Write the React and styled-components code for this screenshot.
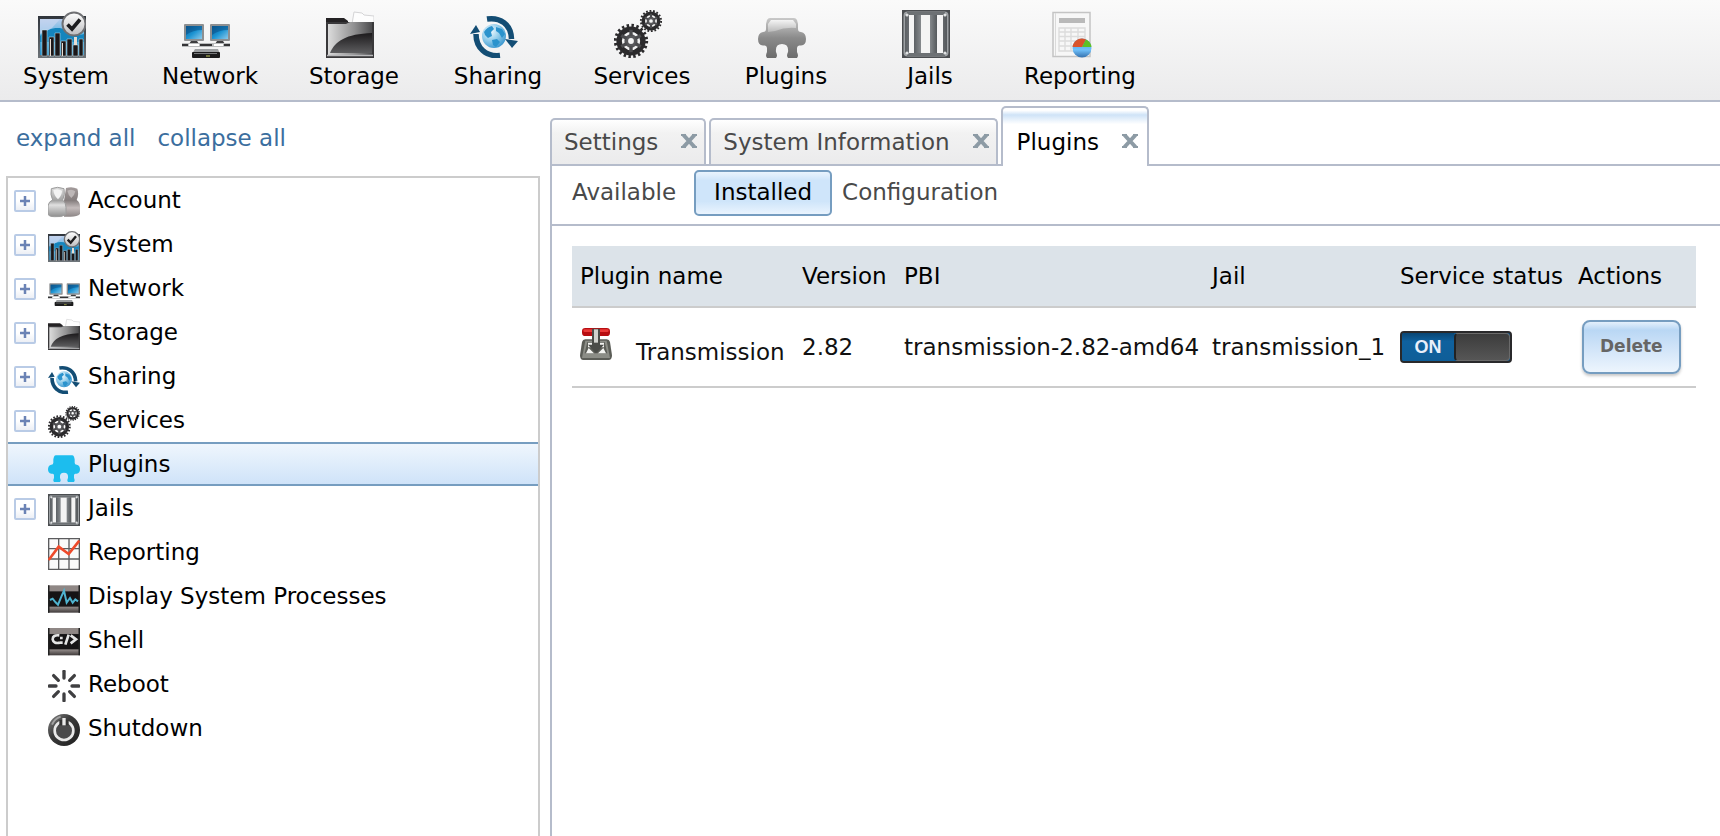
import React, { useState } from "react";
import styled, { createGlobalStyle, css } from "styled-components";

const GlobalStyle = createGlobalStyle`
  *, *::before, *::after { box-sizing: border-box; }
  body {
    margin: 0;
    background: #fff;
    color: #000;
    font-family: Verdana, "DejaVu Sans", sans-serif;
    font-size: 23px;
    line-height: 28px;
  }
  button, input { font: inherit; color: inherit; }
  button { margin: 0; padding: 0; border: 0; background: none; cursor: pointer; }
`;

/* ---------- icons ---------- */

const Svg = styled.svg`
  display: block;
  flex: none;
  width: ${(p) => p.$size}px;
  height: ${(p) => p.$size}px;
`;

const HiddenDefs = styled.svg`
  position: absolute;
  width: 0;
  height: 0;
`;

const Icon = ({ size = 48, viewBox = "0 0 48 48", children }) => (
  <Svg $size={size} viewBox={viewBox} aria-hidden="true">
    {children}
  </Svg>
);

const stops = (list) => list.map(([o, c]) => <stop key={o} offset={o} stopColor={c} />);

const SharedDefs = () => (
  <HiddenDefs aria-hidden="true">
    <defs>
      <linearGradient id="sky" x1="0" y1="0" x2="0" y2="1">{stops([[0, "#b9cdec"], [0.5, "#4fb0df"], [1, "#2a8fc4"]])}</linearGradient>
      <linearGradient id="frame" x1="0" y1="0" x2="0" y2="1">{stops([[0, "#30353c"], [1, "#6d7378"]])}</linearGradient>
      <linearGradient id="badge" x1="0" y1="0" x2="0" y2="1">{stops([[0, "#ffffff"], [1, "#bdbdbf"]])}</linearGradient>
      <linearGradient id="screen" x1="0" y1="0" x2="1" y2="1">{stops([[0, "#0b5c94"], [0.5, "#1b93d2"], [1, "#8cc9ea"]])}</linearGradient>
      <linearGradient id="folder" x1="0" y1="0" x2="1" y2="0">{stops([[0, "#dcdcdc"], [0.6, "#8f8f90"], [1, "#4c4c4e"]])}</linearGradient>
      <linearGradient id="folderDark" x1="0" y1="0" x2="0" y2="1">{stops([[0, "#1c1a1c"], [1, "#5d5d5f"]])}</linearGradient>
      <linearGradient id="plugin" x1="0" y1="0" x2="0" y2="1">{stops([[0, "#c9c9c9"], [0.3, "#a5a5a5"], [0.5, "#8a8a8a"], [1, "#6c6c6c"]])}</linearGradient>
      <linearGradient id="pluginShine" x1="0" y1="0" x2="0" y2="1">{stops([[0, "#f4f4f4"], [1, "#b9b9b9"]])}</linearGradient>
      <linearGradient id="bar" x1="0" y1="0" x2="1" y2="0">{stops([[0, "#5c6064"], [0.5, "#a2a6a9"], [1, "#55595c"]])}</linearGradient>
      <radialGradient id="globe" cx="0.35" cy="0.3" r="0.8">{stops([[0, "#f4fbff"], [0.5, "#8fcbea"], [1, "#2e8fcb"]])}</radialGradient>
      <linearGradient id="person" x1="0" y1="0" x2="0" y2="1">{stops([[0, "#dedede"], [0.45, "#a2a2a2"], [0.6, "#e0e0e0"], [1, "#8e8e8e"]])}</linearGradient>
      <linearGradient id="personDark" x1="0" y1="0" x2="0" y2="1">{stops([[0, "#a39b9b"], [0.45, "#857e7e"], [0.7, "#c4bcbc"], [1, "#8d8686"]])}</linearGradient>
      <linearGradient id="console" x1="0" y1="0" x2="0" y2="1">{stops([[0, "#8f8785"], [0.2, "#8f8785"], [0.24, "#161415"], [0.76, "#161415"], [0.8, "#8f8785"], [1, "#3f3a3a"]])}</linearGradient>
      <linearGradient id="ball" x1="0" y1="0" x2="1" y2="1">{stops([[0, "#8a8a8a"], [0.4, "#3b3b3b"], [1, "#1e1e1e"]])}</linearGradient>
      <linearGradient id="pieBlue" x1="0" y1="0" x2="0" y2="1">{stops([[0, "#4a97dd"], [0.6, "#6fc0fa"], [1, "#3470ad"]])}</linearGradient>
    </defs>
  </HiddenDefs>
);

const SystemIcon = ({ size }) => (
  <Icon size={size}>
    <rect x="0" y="6" width="48" height="42" fill="url(#frame)" />
    <rect x="2" y="9" width="44" height="36" fill="url(#sky)" />
    <path d="M2 26C10 18 20 16 28 20C36 24 42 26 46 24V32H2Z" fill="#1585bd" />
    <path d="M2 9H22L14 18L2 24Z" fill="#c8d6ef" opacity=".7" />
    <g fill="#1b1718" stroke="#cfe4ef" strokeWidth=".5">
      <path d="M4 20h5v26H4zM11 27h5v19h-5zM17 23h5v23h-5zM23 31h5v15h-5zM29 29h5v17h-5zM35 35h5v11h-5zM41 29h4v17h-4z" />
    </g>
    <path d="M36 27h3v8h-3zM12 29h1v17h-1zM24 33h1v13h-1z" fill="#e8ddd2" />
    <circle cx="36" cy="14" r="11.5" fill="url(#badge)" stroke="#6f7073" strokeWidth="2" />
    <path d="M29.5 14.5L34 19L42 9.5" fill="none" stroke="#1c1c1e" strokeWidth="3.6" />
  </Icon>
);

const NetworkIcon = ({ size }) => (
  <Icon size={size}>
    {[2, 28].map((x) => (
      <g key={x}>
        <rect x={x} y="14" width="20" height="17" rx="1" fill="#8d8f91" />
        <rect x={x + 2} y="16" width="16" height="13" fill="url(#screen)" />
        <path d={`M${x + 2} 16h16v4q-9 0-16 5z`} fill="#0a4f86" opacity=".55" />
        <path d={`M${x + 7} 31h6l2 3h-10z`} fill="#3d3d3f" />
      </g>
    ))}
    <rect x="0" y="33" width="48" height="4" fill="#b9bbbc" />
    <path d="M0 34h6v2H0zM18 34h12v2H18zM42 34h6v2h-6z" fill="#343436" />
    <path d="M7 34h10v2H7zM32 34h9v2h-9z" fill="#fff" />
    <path d="M13 39h23l2 5H10z" fill="#9da0a2" />
    <rect x="10" y="42" width="28" height="6" rx="1" fill="#1b1b1c" />
    <path d="M12 43.500h23" stroke="#77797b" strokeWidth="1" />
    <path d="M24 46h4" stroke="#c3c95a" strokeWidth="1" />
  </Icon>
);

const StorageIcon = ({ size }) => (
  <Icon size={size}>
    <path d="M0 8H18L22 11V16H0Z" fill="#242224" />
    <path d="M26 14L28 2L36 3L38 5L48 6V14Z" fill="#fdfdfd" stroke="#d4d4d6" />
    <rect x="0" y="12" width="48" height="36" fill="#39383a" />
    <path d="M2 14H20L24 12H46V45H2Z" fill="url(#folder)" />
    <path d="M4 43C9 31 20 24 46 23V43Z" fill="url(#folderDark)" />
    <path d="M1 45.500H47" stroke="#b9b9bb" strokeWidth="1.500" />
  </Icon>
);

const SharingIcon = ({ size }) => (
  <Icon size={size}>
    <circle cx="24" cy="26" r="12" fill="url(#globe)" />
    <path d="M14 22q3-5 8-6l2 3-3 3 1 4-4 2-3-3zM26 17l6 2 3 5-3 4-3-5-3-2zM22 30l5-1 3 3-4 5-3-2z" fill="#2b93cd" />
    <g fill="none" stroke="#134d74" strokeWidth="5.500">
      <path d="M17 9C30 7 41 14 41.500 29" />
      <path d="M30 45.500C16 47 6 38 6 24" />
    </g>
    <path d="M35 29L48 31L42 38Z" fill="#134d74" />
    <path d="M0 24L6 15L10 22Z" fill="#134d74" />
  </Icon>
);

const Gear = ({ cx, cy, r, teeth }) => (
  <g>
    <circle cx={cx} cy={cy} r={r * 0.92} fill="none" stroke="#2b2a2c" strokeWidth={r * 0.18}
      strokeDasharray={`${(2 * Math.PI * r * 0.92) / teeth / 2}`} />
    <circle cx={cx} cy={cy} r={r * 0.7} fill="none" stroke="#2b2a2c" strokeWidth={r * 0.32} />
    <circle cx={cx} cy={cy} r={r * 0.28} fill="none" stroke="#58585b" strokeWidth={r * 0.22} />
    {[0, 60, 120, 180, 240, 300].map((a) => (
      <path key={a} d={`M${cx} ${cy - r * 0.3}V${cy - r * 0.66}`} stroke="#4b4b4e" strokeWidth={r * 0.2} transform={`rotate(${a} ${cx} ${cy})`} />
    ))}
  </g>
);

const ServicesIcon = ({ size }) => (
  <Icon size={size}>
    <Gear cx={17} cy={31} r={17} teeth={20} />
    <Gear cx={37} cy={11} r={11} teeth={18} />
  </Icon>
);

const PluginIcon = ({ size, color = "url(#plugin)" }) => (
  <Icon size={size}>
    <path
      fill={color}
      d="M12 8H36Q38 8 39 10L40 14V19Q40 22 43 22Q48 23 48 29Q48 35 43 35.500H41Q39 36 39 38V42Q40 44 40 46L39 48H30L29 46Q29 44 30 42Q31 34 24 34Q17 34 18 42Q19 44 19 46L18 48H9L8 46Q8 44 9 42V38Q9 36 7 35.500H5Q0 35 0 29Q0 23 5 22Q8 22 8 19V14L9 10Q10 8 12 8Z"
    />
    {color.startsWith("url") && <path d="M13 10H35L38 14V18Q27 17 17 21L10 22V14Z" fill="url(#pluginShine)" />}
  </Icon>
);

const JailsIcon = ({ size }) => (
  <Icon size={size}>
    <rect width="48" height="48" fill="#4a4d50" />
    <rect x="2.500" y="2.500" width="43" height="43" rx="3" fill="none" stroke="#9da1a4" strokeWidth="2" />
    <path d="M6 5H42V43H6Z" fill="#f4f4f4" />
    <path d="M5 3.500H43M5 44.500H43" stroke="#6d7174" strokeWidth="3" />
    <path d="M3 5h4v38H3zM41 5h4v38h-4z" fill="url(#bar)" />
    <path d="M12 5h7v38h-7zM28 5h7v38h-7z" fill="url(#bar)" />
    <g fill="#e1e3e4">
      <circle cx="5" cy="5" r="1.600" /><circle cx="43" cy="5" r="1.600" />
      <circle cx="5" cy="43" r="1.600" /><circle cx="43" cy="43" r="1.600" />
    </g>
  </Icon>
);

const ReportIcon = ({ size }) => (
  <Icon size={size} viewBox="3 0 48 48">
    <rect x="4" y="2.500" width="37" height="44" fill="#f7f7f7" stroke="#c4c4c4" strokeWidth="1.500" />
    <path d="M6.500 3V46" stroke="#dadada" />
    <rect x="10" y="8" width="26" height="5" fill="#b9b9b9" />
    <path d="M10 18H36V41H10ZM10 22H36M10 26.500H36M10 31H36M10 36H36M16 18V41M22 18V41M29 18V41" fill="none" stroke="#dcdcdc" strokeWidth="1.400" />
    <circle cx="33" cy="38" r="9.500" fill="url(#pieBlue)" />
    <path d="M33 37L23.500 37A9.500 9.500 0 0 1 37 29.500Z" fill="#d9532b" />
    <path d="M33 37L37 29.500A9.500 9.500 0 0 1 42.500 37Z" fill="#5cc028" />
  </Icon>
);

const AccountIcon = ({ size }) => (
  <Icon size={size}>
    <path d="M27 3Q36 0 44 4Q47 12 43 21Q48 24 48 31V42Q44 46 34 46H24V22Z" fill="url(#personDark)" />
    <path d="M5 4Q14 0 24 4Q26 13 22 21Q27 25 27 32V43Q20 47 10 46Q1 46 0 42V30Q1 23 7 21Q3 13 5 4Z" fill="url(#person)" stroke="#9c9c9c" strokeWidth="1.500" />
    <path d="M8 6Q15 3 21 7Q21 14 15 20Q9 15 8 6Z" fill="#f3f3f3" />
    <path d="M29 7Q36 4 41 8Q40 14 35 18Q30 13 29 7Z" fill="#bdb7b7" />
  </Icon>
);

const ChartIcon = ({ size }) => (
  <Icon size={size}>
    <rect x="1" y="1" width="46" height="46" fill="#fafafa" />
    <path d="M1 0V48M16 0V48M31.500 0V48M47 0V48M0 1H48M0 16H48M0 31.500H48M0 47H48" stroke="#5c5c5e" strokeWidth="2" />
    <path d="M1 33L16 13L31 24L47 4" fill="none" stroke="#ee4a2b" strokeWidth="4" />
  </Icon>
);

const ProcessesIcon = ({ size }) => (
  <Icon size={size}>
    <rect y="5" width="48" height="41" fill="url(#console)" />
    <path d="M1 5V46M47 5V46" stroke="#222" strokeWidth="2.500" />
    <path d="M3 27L7 25L11 30L15 34L20 22L24 13L28 31L33 24L37 31L41 26L45 29" fill="none" stroke="#4fb3cf" strokeWidth="3" />
  </Icon>
);

const ShellIcon = ({ size }) => (
  <Icon size={size}>
    <rect y="3" width="48" height="41" fill="url(#console)" />
    <path d="M1 3V44M47 3V44" stroke="#222" strokeWidth="2.500" />
    <path d="M17 14Q7 13 7 20Q8 27 18 25M34 14L42 20L34 26M31 13L26 28" fill="none" stroke="#e4e4e4" strokeWidth="4" />
    <path d="M20 16v4M20 23v4" stroke="#e4e4e4" strokeWidth="4" />
  </Icon>
);

const RebootIcon = ({ size }) => (
  <Icon size={size}>
    {[0, 45, 90, 135, 180, 225, 270, 315].map((a) => (
      <path key={a} d="M24 2V12" stroke="#3f3f41" strokeWidth="5" strokeLinecap="round" transform={`rotate(${a} 24 24)`} />
    ))}
  </Icon>
);

const ShutdownIcon = ({ size }) => (
  <Icon size={size}>
    <circle cx="24" cy="24" r="24" fill="url(#ball)" />
    <circle cx="24" cy="25" r="14" fill="#4a4a4b" stroke="#e9e9e9" strokeWidth="4" />
    <path d="M17 9V17H31V9Z" fill="#333" />
    <path d="M24 6V17" stroke="#e9e9e9" strokeWidth="5" />
    <path d="M6 16Q10 7 19 4" fill="none" stroke="#bdbdbd" strokeWidth="3" opacity=".7" />
  </Icon>
);

const TransmissionIcon = ({ size }) => (
  <Icon size={size}>
    <path d="M8 17H40Q44 17 45 21L48 41Q48 48 43 48H5Q0 48 0 41L3 21Q4 17 8 17Z" fill="#5b5d57" />
    <path d="M8 19H40L45 45H3Z" fill="#8b8d86" />
    <path d="M11 21H37L41 38H7Z" fill="#5b5d57" />
    <path d="M12 22H19V29H12ZM29 22H36V29H29ZM9 38L13 30L21 38ZM39 38L35 30L27 38Z" fill="#f4f5f2" />
    <rect x="3" y="0" width="42" height="12" rx="5" fill="#b80d11" />
    <rect x="5" y="2" width="38" height="4" rx="2" fill="#ea3a39" />
    <path d="M18 1h12v24h6L24 38L12 25h6z" fill="#4a4c48" />
    <path d="M21 2h6v20h-6z" fill="#d0d2cd" />
  </Icon>
);

/* ---------- top toolbar ---------- */

const Page = styled.div`
  display: flex;
  flex-direction: column;
  min-height: 100vh;
`;

const Toolbar = styled.nav`
  display: flex;
  flex: none;
  gap: 24px;
  padding: 10px 6px;
  background: linear-gradient(#fafafa, #ebebec);
  border-bottom: 2px solid #b5bccb;
`;

const ToolButton = styled.button`
  display: flex;
  flex-direction: column;
  align-items: center;
  gap: 4px;
  min-width: 120px;
  padding: 0 10px;
  white-space: nowrap;

  svg { margin-right: 8px; }
`;

/* ---------- sidebar ---------- */

const Body = styled.div`
  display: flex;
  flex: 1;
  gap: 10px;
`;

const Sidebar = styled.aside`
  display: flex;
  flex: none;
  flex-direction: column;
  width: 540px;
  padding-left: 6px;
`;

const TreeLinks = styled.div`
  display: flex;
  gap: 22px;
  padding: 22px 10px 24px;

  a { color: #3b6e9e; text-decoration: none; }
`;

const Tree = styled.ul`
  flex: 1;
  margin: 0;
  padding: 0;
  list-style: none;
  border: 2px solid #ccc;
  border-bottom: 0;
`;

const TreeRow = styled.li`
  display: flex;
  align-items: center;
  height: 44px;
  padding: 2px 0 0 6px;
  border: solid transparent;
  border-width: 2px 0;
  ${(p) => p.$selected && css`
    border-color: #769dc0;
    background: linear-gradient(#eff6fd, #cfe3f9);
  `}
`;

const Expander = styled.button`
  display: flex;
  flex: none;
  align-items: center;
  justify-content: center;
  width: 22px;
  height: 22px;
  border: 2px solid #b9cbe6;
  border-radius: 2px;
  background: linear-gradient(#fff 50%, #eceff5);
`;

const ExpanderSpace = styled.span`
  flex: none;
  width: 22px;
`;

const TreeItem = styled.button`
  display: flex;
  flex: 1;
  align-items: center;
  gap: 8px;
  padding-left: 12px;
  text-align: left;

  span { padding-bottom: 2px; }
  svg { margin-top: 2px; }
`;

const PlusMark = () => (
  <svg width="12" height="12" viewBox="0 0 12 12" aria-hidden="true">
    <path d="M6 1V11M1 6H11" stroke="#6b83b5" strokeWidth="2.500" />
  </svg>
);

/* ---------- tabs ---------- */

const Main = styled.main`
  display: flex;
  flex: 1;
  flex-direction: column;
  min-width: 0;
  padding-top: 4px;
`;

const TabStrip = styled.div`
  display: flex;
  flex: none;
  align-items: flex-end;
  gap: 3px;
  border-bottom: 2px solid #b5bccb;
`;

const Tab = styled.div`
  display: flex;
  align-items: center;
  gap: 22px;
  height: 46px;
  padding: 0 6px 0 12px;
  color: #494949;
  border: 2px solid #b5bccb;
  border-bottom: 0;
  border-radius: 5px 5px 0 0;
  background: linear-gradient(#fff, #f2f2f2 30%, #ebebec);
  white-space: nowrap;
  ${(p) => p.$active && css`
    height: 60px;
    margin-bottom: -2px;
    padding: 10px 8px 0 14px;
    color: #000;
    background: linear-gradient(#fff 4%, #cfe3f7 12%, #fff 28%);
  `}
`;

const CloseButton = styled.button`
  display: flex;
  padding-bottom: 2px;
`;

const CloseMark = () => (
  <svg width="18" height="16" viewBox="0 0 18 16" aria-hidden="true">
    <path d="M3.500 2L14.500 14M14.500 2L3.500 14" stroke="#8d9ba5" strokeWidth="4" />
    <path d="M1 2H6M12 2H17M1 14H6M12 14H17" stroke="#8d9ba5" strokeWidth="2" />
  </svg>
);

const Pane = styled.section`
  flex: 1;
  border-left: 2px solid #b5bccb;
`;

const SubTabs = styled.div`
  display: flex;
  padding: 4px 10px 8px;
  border-bottom: 2px solid #b5bccb;
`;

const SubTab = styled.button`
  height: 46px;
  padding: 0 8px 2px;
  color: #494949;
  border: 2px solid transparent;
  border-radius: 5px;
  ${(p) => p.$active && css`
    margin-left: 8px;
    padding: 0 18px 2px;
    color: #000;
    border-color: #769dc0;
    background: linear-gradient(#eaf4fe, #cfe5fa 20%, #cfe5fa 70%, #eaf4fe);
  `}
`;

/* ---------- plugin table ---------- */

const TableArea = styled.div`
  padding: 20px 24px 20px 20px;
`;

const PluginTable = styled.table`
  width: 100%;
  table-layout: fixed;
  border-collapse: separate;
  border-spacing: 0;
  white-space: nowrap;

  th, td {
    padding: 0 8px;
    text-align: left;
    font-weight: 400;
    border-bottom: 2px solid #ccc;
  }
  th { height: 62px; background: #dce3e9; }
  td { height: 80px; color: #111; }
`;

const PluginName = styled.div`
  display: flex;
  gap: 24px;

  span { padding-top: 10px; }
`;

const Switch = styled.label`
  position: relative;
  display: flex;
  width: 112px;
  height: 32px;
  overflow: hidden;
  border: 2px solid #29292b;
  border-radius: 4px;
  background: #0d5a94;
  cursor: pointer;

  input {
    position: absolute;
    inset: 0;
    width: 100%;
    height: 100%;
    margin: 0;
    opacity: 0;
    cursor: pointer;
  }
`;

const SwitchText = styled.span`
  flex: 1;
  color: #e9effa;
  font: bold 18px/28px "Liberation Sans", sans-serif;
  text-align: center;
  background: linear-gradient(#0a4674, #0f619e 30%, #0f5e98);
`;

const SwitchKnob = styled.span`
  flex: none;
  width: 56px;
  border: 1px solid #6b6b6b;
  border-left: 2px solid #222;
  border-radius: 4px;
  background: linear-gradient(#3c3c3c, #565656);
`;

const DeleteButton = styled.button`
  display: block;
  height: 54px;
  margin-left: 4px;
  padding: 0 16px 2px;
  color: #666;
  font-size: 17px;
  font-weight: 700;
  border: 2px solid #769dc0;
  border-radius: 8px;
  background: linear-gradient(#e4f0fc, #b9d7f4 16%, #cfe3f8 50%, #edf5fd);
  box-shadow: 0 2px 3px rgba(0, 0, 0, 0.22);
`;

const TOOLS = [
  ["System", SystemIcon],
  ["Network", NetworkIcon],
  ["Storage", StorageIcon],
  ["Sharing", SharingIcon],
  ["Services", ServicesIcon],
  ["Plugins", PluginIcon],
  ["Jails", JailsIcon],
  ["Reporting", ReportIcon],
];

const TREE = [
  { name: "Account", Glyph: AccountIcon, children: true },
  { name: "System", Glyph: SystemIcon, children: true },
  { name: "Network", Glyph: NetworkIcon, children: true },
  { name: "Storage", Glyph: StorageIcon, children: true },
  { name: "Sharing", Glyph: SharingIcon, children: true },
  { name: "Services", Glyph: ServicesIcon, children: true },
  { name: "Plugins", Glyph: PluginIcon, color: "#1cbdee" },
  { name: "Jails", Glyph: JailsIcon, children: true },
  { name: "Reporting", Glyph: ChartIcon },
  { name: "Display System Processes", Glyph: ProcessesIcon },
  { name: "Shell", Glyph: ShellIcon },
  { name: "Reboot", Glyph: RebootIcon },
  { name: "Shutdown", Glyph: ShutdownIcon },
];

const COLUMNS = [
  ["Plugin name", 222],
  ["Version", 102],
  ["PBI", 308],
  ["Jail", 188],
  ["Service status", 178],
  ["Actions", 126],
];

export default function App() {
  const [selected, setSelected] = useState("Plugins");
  const [tab, setTab] = useState("Plugins");
  const [subTab, setSubTab] = useState("Installed");
  const [on, setOn] = useState(true);

  return (
    <Page>
      <GlobalStyle />
      <SharedDefs />
      <Toolbar aria-label="Main">
        {TOOLS.map(([name, Glyph]) => (
          <ToolButton key={name} type="button">
            <Glyph size={48} />
            {name}
          </ToolButton>
        ))}
      </Toolbar>
      <Body>
        <Sidebar>
          <TreeLinks>
            <a href="#expand">expand all</a>
            <a href="#collapse">collapse all</a>
          </TreeLinks>
          <Tree>
            {TREE.map(({ name, Glyph, children, color }) => (
              <TreeRow key={name} $selected={name === selected}>
                {children ? (
                  <Expander type="button" aria-label={`Expand ${name}`}>
                    <PlusMark />
                  </Expander>
                ) : (
                  <ExpanderSpace />
                )}
                <TreeItem type="button" onClick={() => setSelected(name)}>
                  <Glyph size={32} color={color} />
                  <span>{name}</span>
                </TreeItem>
              </TreeRow>
            ))}
          </Tree>
        </Sidebar>
        <Main>
          <TabStrip>
            {["Settings", "System Information", "Plugins"].map((name) => (
              <Tab key={name} $active={name === tab}>
                <button type="button" onClick={() => setTab(name)}>{name}</button>
                <CloseButton type="button" aria-label={`Close ${name}`}>
                  <CloseMark />
                </CloseButton>
              </Tab>
            ))}
          </TabStrip>
          <Pane>
            <SubTabs>
              {["Available", "Installed", "Configuration"].map((name) => (
                <SubTab key={name} type="button" $active={name === subTab} onClick={() => setSubTab(name)}>
                  {name}
                </SubTab>
              ))}
            </SubTabs>
            <TableArea>
              <PluginTable>
                <colgroup>
                  {COLUMNS.map(([name, width]) => (
                    <col key={name} width={width} />
                  ))}
                </colgroup>
                <thead>
                  <tr>
                    {COLUMNS.map(([name]) => (
                      <th key={name} scope="col">{name}</th>
                    ))}
                  </tr>
                </thead>
                <tbody>
                  <tr>
                    <td>
                      <PluginName>
                        <TransmissionIcon size={32} />
                        <span>Transmission</span>
                      </PluginName>
                    </td>
                    <td>2.82</td>
                    <td>transmission-2.82-amd64</td>
                    <td>transmission_1</td>
                    <td>
                      <Switch>
                        <input type="checkbox" role="switch" aria-label="Transmission service" checked={on} onChange={() => setOn(!on)} />
                        {on && <SwitchText>ON</SwitchText>}
                        <SwitchKnob />
                        {!on && <SwitchText>OFF</SwitchText>}
                      </Switch>
                    </td>
                    <td>
                      <DeleteButton type="button">Delete</DeleteButton>
                    </td>
                  </tr>
                </tbody>
              </PluginTable>
            </TableArea>
          </Pane>
        </Main>
      </Body>
    </Page>
  );
}
